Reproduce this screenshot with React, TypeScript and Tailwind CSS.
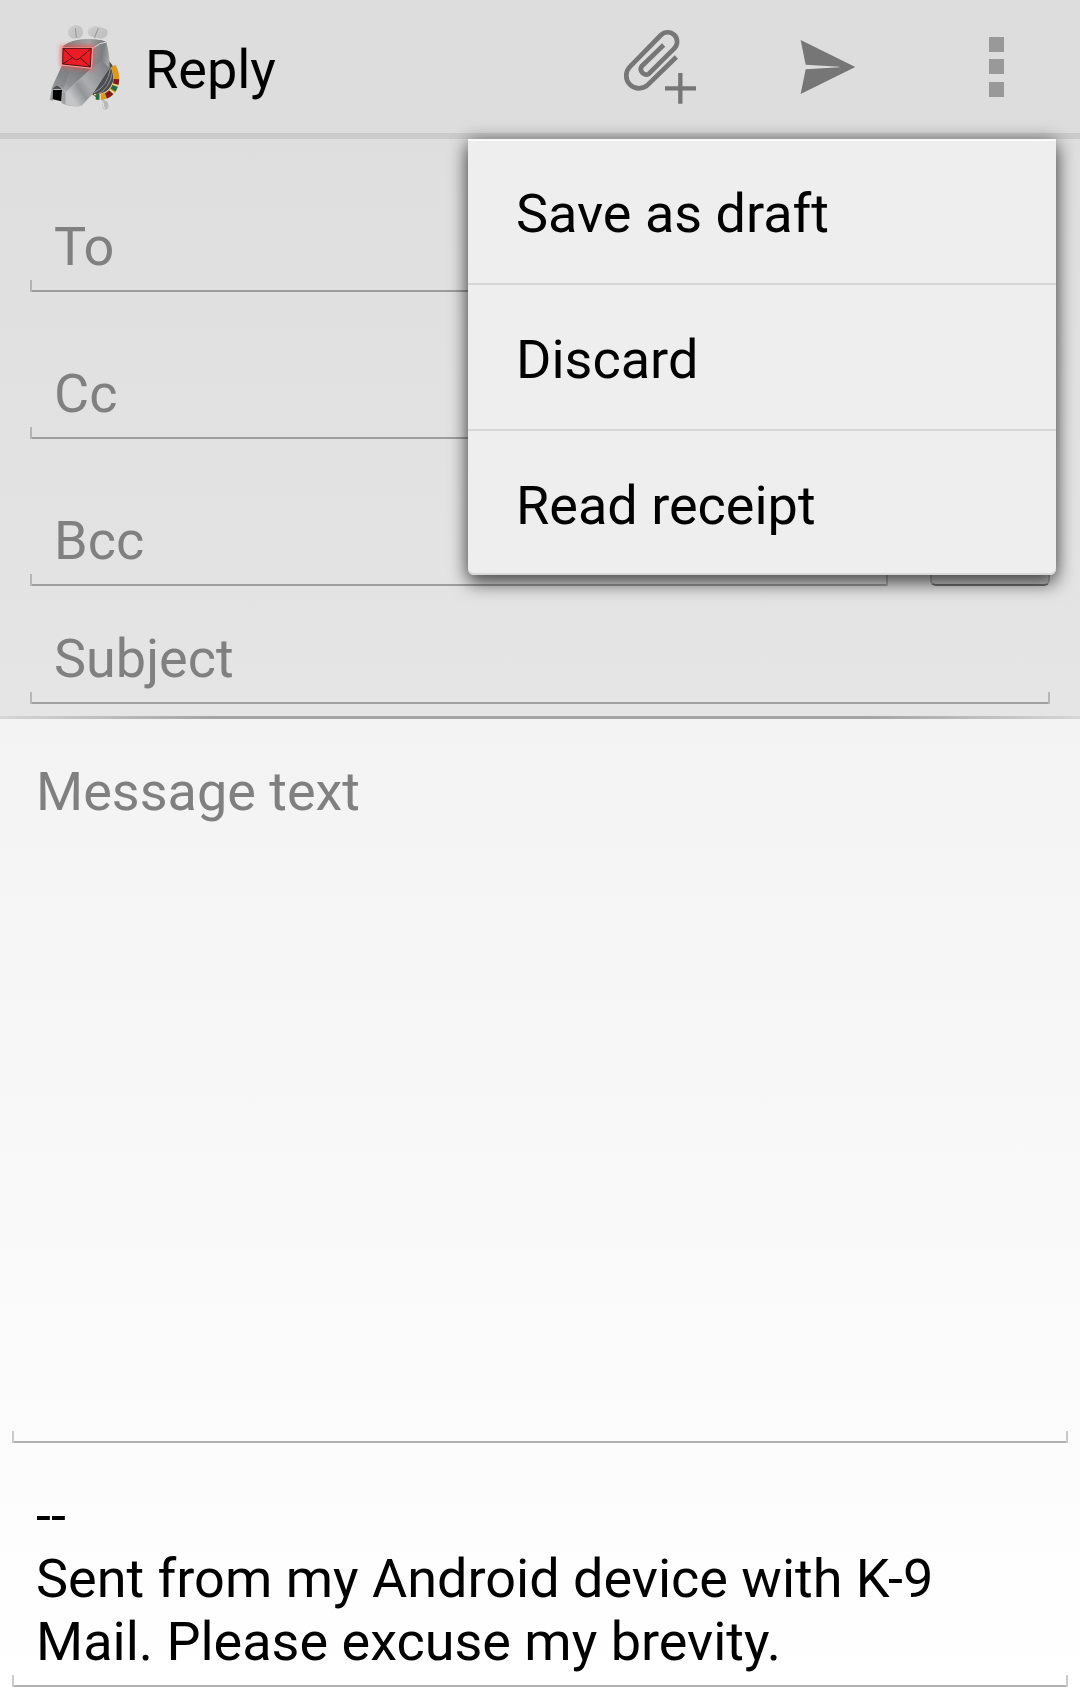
import type { ComponentProps } from "react";

function K9Logo() {
  return (
    <svg viewBox="0 0 252 288" className="h-24 w-[84px] shrink-0" aria-hidden="true">
      <defs>
        <linearGradient id="k9-head" x1="0" y1="0" x2="1" y2="0.2">
          <stop offset="0" stopColor="#8b8c8e" />
          <stop offset="0.65" stopColor="#8f9093" />
          <stop offset="0.85" stopColor="#7c7d80" />
          <stop offset="1" stopColor="#a4a6a8" />
        </linearGradient>
        <linearGradient id="k9-top" x1="0" y1="0" x2="1" y2="0">
          <stop offset="0" stopColor="#77797b" />
          <stop offset="0.6" stopColor="#a2a3a5" />
          <stop offset="1" stopColor="#6f7173" />
        </linearGradient>
        <linearGradient id="k9-snout" x1="0" y1="0.8" x2="0.8" y2="0.2">
          <stop offset="0" stopColor="#b4b6b8" />
          <stop offset="0.4" stopColor="#909194" />
          <stop offset="1" stopColor="#77797c" />
        </linearGradient>
        <linearGradient id="k9-jaw" gradientUnits="userSpaceOnUse" x1="75" y1="225" x2="190" y2="150">
          <stop offset="0" stopColor="#c4c5c7" />
          <stop offset="0.25" stopColor="#939497" />
          <stop offset="0.45" stopColor="#abacae" />
          <stop offset="1" stopColor="#808285" />
        </linearGradient>
        <linearGradient id="k9-ear" x1="0" y1="0" x2="1" y2="1">
          <stop offset="0" stopColor="#e6e6e6" />
          <stop offset="0.25" stopColor="#c8c8c8" />
          <stop offset="1" stopColor="#bebebe" />
        </linearGradient>
        <filter id="k9-glow" x="-30%" y="-30%" width="160%" height="160%">
          <feGaussianBlur stdDeviation="6" />
        </filter>
      </defs>
      {/* neck */}
      <path d="M140 225 L196 130 Q216 150 213 190 Q202 236 156 238 Z" fill="#4c4d50" />
      <path d="M150 224 Q190 207 200 150 M156 232 Q197 216 207 156" fill="none" stroke="#8f9194" strokeWidth="3" />
      {/* tag */}
      <path d="M170 243 L186 252" stroke="#aaa" strokeWidth="4" />
      <ellipse cx="184" cy="262" rx="9" ry="13" fill="#b9b9b9" />
      <path d="M178 254 Q176 264 182 272" fill="none" stroke="#e6e6e6" strokeWidth="3" />
      {/* collar */}
      <path d="M150 230 Q196 232 209 190 Q213 168 203 147" fill="none" stroke="#ecd9a8" strokeWidth="4" />
      <path d="M156 236 Q204 242 216 195 Q221 168 207 145" fill="none" stroke="#dd9a18" strokeWidth="17" />
      <path d="M156 236 Q204 242 216 195 Q221 168 207 145" fill="none" stroke="#7d1c20" strokeWidth="17" strokeDasharray="0 30 20 28 14 100" />
      <path d="M156 236 Q204 242 216 195 Q221 168 207 145" fill="none" stroke="#1f6b45" strokeWidth="17" strokeDasharray="9 49 14 100" />
      <path d="M156 236 Q204 242 216 195 Q221 168 207 145" fill="none" stroke="#eadfc0" strokeWidth="17" strokeDasharray="0 11 3 36 5 18 3 100" />
      {/* ears */}
      <rect x="72" y="22" width="45" height="40" rx="19" fill="url(#k9-ear)" />
      <path d="M131 36 Q135 22 152 24 L178 30 Q193 34 191 46 Q188 61 173 62 L148 58 Q130 54 131 36Z" fill="url(#k9-ear)" />
      <path d="M94 31 L97 57 L101 71 M163 31 L153 54 L151 72" fill="none" stroke="#939393" strokeWidth="3" />
      <path d="M97 60 L101 70 M153 60 L151 70" stroke="#eeeeee" strokeWidth="4" />
      {/* head */}
      <path d="M56 88 Q74 65 130 64 Q178 64 187 73 Q197 108 197 149 L145 229 L110 263 Q96 268 65 260 L64 222 L144 150 L148 90Z" fill="url(#k9-head)" />
      <path d="M56 88 Q74 66 130 64 Q176 64 187 73 Q168 72 148 90Z" fill="url(#k9-top)" />
      <path d="M148 90 Q166 74 187 72" fill="none" stroke="#dcdcdc" strokeWidth="3" />
      <path d="M144 150 L172 128 L197 149 L150 222 L113 263 Q90 268 63 259 L65 222Z" fill="url(#k9-jaw)" />
      <path d="M144 151 L64 224" stroke="#b9babc" strokeWidth="2" />
      <path d="M54 142 L143 151 L64 222 Q48 203 24 210Z" fill="url(#k9-snout)" />
      <path d="M52 146 L24 207 Q43 198 58 211 L78 158Z" fill="#77797c" opacity="0.5" />
      <path d="M24 206 L17 246 L27 248 L28 215 Q42 208 55 218 L53 256 L65 260 L64 224 Q50 198 24 206Z" fill="#9fa1a3" />
      <path d="M25 214 Q38 192 53 214Z" fill="#4f5052" />
      <path d="M27 216 L54 216 L52 250 L26 244Z" fill="#000" />
      {/* glowing envelope */}
      <path d="M53 86 L147 86 L142 153 L53 143Z" fill="#ff3030" stroke="#ff4a4a" strokeWidth="8" opacity="0.65" filter="url(#k9-glow)" />
      <path d="M56 90 L144 90 L140 149 L55 140Z" fill="#ed1c24" stroke="#ff9a94" strokeWidth="6" />
      <path d="M57 91 L142 91 L139 147 L56 138Z" fill="#ed1c24" stroke="#4a1216" strokeWidth="3" />
      <path d="M57 91 Q79 114 91 123 Q98 128 106 122 L142 91 M56 138 L87 118 M139 147 L109 120" fill="none" stroke="#4a1216" strokeWidth="3" />
    </svg>
  );
}

function AttachIcon() {
  return (
    <svg viewBox="36 24 288 288" className="size-24" fill="none" stroke="#767676" aria-hidden="true">
      <path
        d="M229 141 L144 224 A38 38 0 0 1 90 170 L183 75 A28 28 0 0 1 223 115 L147 191 A16 16 0 0 1 125 169 L191 105"
        strokeWidth="14"
      />
      <path d="M241 189 V281 M195 235 H288" strokeWidth="13" />
    </svg>
  );
}

function SendIcon() {
  return (
    <svg viewBox="540 24 288 288" className="size-24" aria-hidden="true">
      <path d="M602 90 L766 171 L602 252 L617 178 L718 172 V170 L617 164Z" fill="#767676" />
    </svg>
  );
}

function OverflowIcon() {
  return (
    <svg viewBox="0 0 96 96" className="size-24" fill="#999" aria-hidden="true">
      <rect x="41" y="19" width="15" height="15" />
      <rect x="41" y="41" width="15" height="15" />
      <rect x="41" y="64" width="15" height="15" />
    </svg>
  );
}

function Underline() {
  return (
    <span aria-hidden="true" className="pointer-events-none absolute inset-x-0 bottom-0 h-3">
      <span className="absolute bottom-0 left-0 h-3 w-0.5 bg-black/20" />
      <span className="absolute inset-x-0.5 bottom-0 h-0.5 bg-black/30" />
      <span className="absolute right-0 bottom-0 h-3 w-0.5 bg-black/20" />
    </span>
  );
}

function Field({ label }: { label: string }) {
  return (
    <div className="relative px-6 pt-[41px] pb-[14px]">
      <input
        type="text"
        aria-label={label}
        placeholder={label}
        className="block h-[63px] w-full bg-transparent leading-[63px] outline-none placeholder:text-[#808080]"
      />
      <Underline />
    </div>
  );
}

function TextArea({ className, ...props }: ComponentProps<"textarea">) {
  return (
    <div className={className}>
      <textarea
        {...props}
        className="block w-full flex-1 resize-none overflow-hidden bg-transparent leading-[63px] outline-none placeholder:text-[#808080]"
      />
      <Underline />
    </div>
  );
}

const menuItems = ["Save as draft", "Discard", "Read receipt"];

export default function App() {
  return (
    <div className="flex min-h-screen flex-col bg-white pb-3 font-['Roboto',sans-serif] text-[54px] leading-[63px] text-black">
      <div className="bg-linear-to-b from-[#dddddd] to-[#e5e5e5]">
        <header className="relative z-10 border-b-[6px] border-[#cbcbcb] bg-[#dddddd] pb-px">
          <div className="flex h-[132px] items-center pl-11">
            <K9Logo />
            <h1 className="ml-[17px] flex-1 pt-[7px]">Reply</h1>
            <button type="button" aria-label="Add attachment" className="flex w-[168px] justify-center">
              <AttachIcon />
            </button>
            <button type="button" aria-label="Send" className="flex w-[168px] justify-center">
              <SendIcon />
            </button>
            <button type="button" aria-label="More options" aria-expanded="true" className="flex w-[168px] justify-center">
              <OverflowIcon />
            </button>
          </div>
          <div
            role="menu"
            className="absolute top-[139px] right-6 w-[588px] divide-y-2 divide-[#d6d6d6] rounded-b-md bg-[#eeeeee] shadow-[inset_0_2px_0_#fafafa,inset_0_-2px_0_#d8d8d8,0_0_18px_rgba(0,0,0,0.35),0_9px_18px_rgba(0,0,0,0.55)]"
          >
            {menuItems.map((item) => (
              <div key={item}>
                <button type="button" role="menuitem" className="flex h-36 w-full items-center pt-[5px] pl-12 text-left">
                  {item}
                </button>
              </div>
            ))}
          </div>
        </header>

        <section className="px-[30px] pt-[35px] pb-3">
          <div className="flex items-end gap-[42px]">
            <div className="flex flex-1 flex-col gap-[29px]">
              <Field label="To" />
              <Field label="Cc" />
              <Field label="Bcc" />
            </div>
            <button
              type="button"
              aria-label="Add recipient from contacts"
              className="h-28 w-[120px] rounded-md border-2 border-t-0 border-[#adadad] border-b-[#737373] bg-[#cfcfcf]"
            />
          </div>
          <Field label="Subject" />
        </section>
        <div className="flex h-[3px]">
          <div className="w-1/5 bg-linear-to-r from-[#d6d6d6] to-[#a3a3a3]" />
          <div className="flex-1 bg-[#a3a3a3]" />
          <div className="w-1/5 bg-linear-to-l from-[#d6d6d6] to-[#a3a3a3]" />
        </div>
      </div>

      <main className="flex flex-1 flex-col bg-linear-to-b from-[#f3f3f3] to-white px-3">
        <TextArea
          aria-label="Message text"
          placeholder="Message text"
          className="relative flex flex-1 flex-col px-6 pt-[41px] pb-[14px]"
        />
        <TextArea
          aria-label="Signature"
          rows={3}
          defaultValue={"--\nSent from my Android device with K-9 Mail. Please excuse my brevity."}
          className="relative px-6 pt-[41px] pb-[14px]"
        />
      </main>
    </div>
  );
}
